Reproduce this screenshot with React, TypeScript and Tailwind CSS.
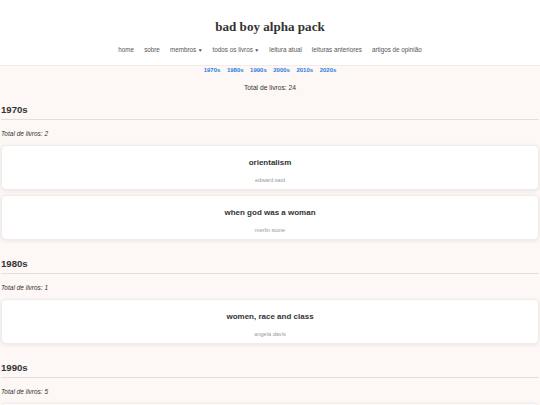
import React from 'react';

type Book = { title: string; author: string };
type Decade = { name: string; books: Book[]; total: number };

const decades: Decade[] = [
  {
    name: '1970s',
    total: 2,
    books: [
      { title: 'orientalism', author: 'edward said' },
      { title: 'when god was a woman', author: 'merlin stone' },
    ],
  },
  {
    name: '1980s',
    total: 1,
    books: [{ title: 'women, race and class', author: 'angela davis' }],
  },
  {
    name: '1990s',
    total: 5,
    books: [{ title: 'the beauty myth', author: 'naomi wolf' }],
  },
];

const navItems = [
  { label: 'home' },
  { label: 'sobre' },
  { label: 'membros', caret: true },
  { label: 'todos os livros', caret: true },
  { label: 'leitura atual' },
  { label: 'leituras anteriores' },
  { label: 'artigos de opinião' },
];

const links = ['1970s', '1980s', '1990s', '2000s', '2010s', '2020s'];

const App: React.FC = () => {
  return (
    <div
      className="h-screen overflow-hidden bg-[#fdf8f5] text-[#333]"
      style={{ fontFamily: '"Liberation Sans", Arial, sans-serif' }}
    >
      <header className="bg-white border-b border-[#f3ece7] pt-[19px] pb-[11px] flex flex-col items-center">
        <h1
          className="text-[13.1px] font-bold leading-[16px] text-[#333]"
          style={{ fontFamily: '"Liberation Serif", "Times New Roman", serif' }}
        >
          bad boy alpha pack
        </h1>
        <nav className="mt-[11px] flex gap-[10px] text-[6.3px] leading-[8px] text-[#555]">
          {navItems.map((item) => (
            <span key={item.label} className="flex items-center gap-[1.5px]">
              {item.label}
              {item.caret && <span className="text-[5px]">▼</span>}
            </span>
          ))}
        </nav>
      </header>

      <div className="flex justify-center gap-[6.5px] text-[6px] font-bold leading-[8px] text-[#2b7de0]">
        {links.map((l) => (
          <a key={l} href={`#${l}`}>
            {l}
          </a>
        ))}
      </div>
      <p className="text-center text-[6.7px] leading-[8px] mt-[10px]">Total de livros: 24</p>

      <main className="px-[1px] pt-[12px]">
        {decades.map((d) => (
          <section key={d.name} className="mb-[18px]">
            <h2 className="text-[9.6px] font-bold leading-[12px] pb-[3px] border-b-[1.5px] border-[#e3dfdb]">
              {d.name}
            </h2>
            <p className="italic text-[6.5px] leading-[8px] mt-[10px] mb-[7px]">
              Total de livros: {d.total}
            </p>
            <div className="flex flex-col gap-[5px]">
              {d.books.map((b) => (
                <div
                  key={b.title}
                  className="bg-white rounded-[5px] border border-[#f1ece8] shadow-[0_1px_4px_rgba(0,0,0,0.08)] h-[45px] flex flex-col items-center pt-[12px]"
                >
                  <div className="text-[8px] font-bold leading-[10px] text-[#333]">{b.title}</div>
                  <div className="text-[5.6px] leading-[7px] text-[#999] mt-[9px]">{b.author}</div>
                </div>
              ))}
            </div>
          </section>
        ))}
      </main>
    </div>
  );
};

export default App;
